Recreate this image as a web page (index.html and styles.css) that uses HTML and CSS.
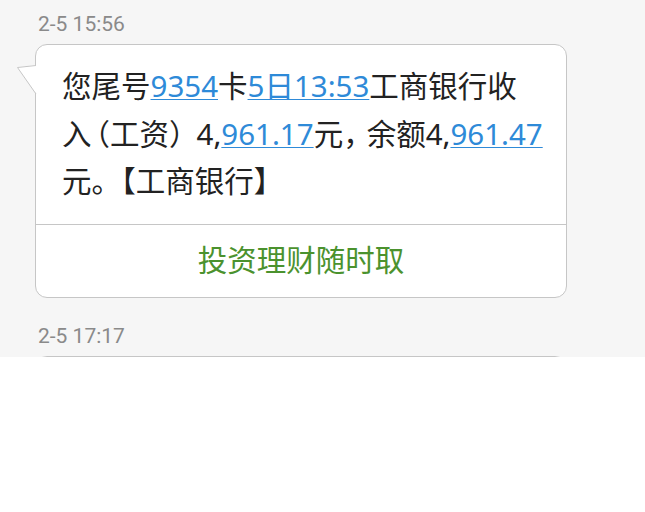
FILE: index.html
```html
<!DOCTYPE html>
<html lang="zh">
<head>
<meta charset="utf-8">
<title>短信</title>
<link rel="stylesheet" href="styles.css">
</head>
<body>
<div class="screen">
  <div class="msg">
    <div class="time">2-5 15:56</div>
    <div class="bubble">
      <svg class="tail" width="20" height="32" viewBox="0 0 20 32">
        <polygon points="20,0 0,2 20,30" fill="#fff"/>
        <polyline points="19,0.5 0.5,2.5 19,29" fill="none" stroke="#c6c6c6" stroke-width="1"/>
      </svg>
      <div class="body">您尾号<a class="link">9354</a>卡<a class="link">5日13:53</a>工商银行收入<span class="p-open">（</span>工资<span class="p-close">）</span>4,<a class="link">961.17</a>元<span class="p-comma">，</span>余额4,<a class="link">961.47</a>元。【工商银行】</div>
      <div class="action">投资理财随时取</div>
    </div>
  </div>
  <div class="msg">
    <div class="time">2-5 17:17</div>
    <div class="bubble">
      <div class="body">&nbsp;</div>
    </div>
  </div>
</div>
</body>
</html>
```
FILE: styles.css
```css
html, body {
  margin: 0;
  padding: 0;
  background: #ffffff;
}
.screen {
  background: #f6f6f6;
  height: 357px;
  overflow: hidden;
  padding: 0 78px 0 35px;
  font-family: "Noto Sans", "Noto Sans CJK SC", sans-serif;
}
.msg + .msg {
  margin-top: 14px;
}
.time {
  font-family: "Liberation Sans Narrow", Roboto, sans-serif;
  font-size: 21px;
  line-height: 24px;
  color: #8a8a8a;
  padding: 12px 3px 8px;
}
.bubble {
  position: relative;
  background: #ffffff;
  border: 1px solid #c6c6c6;
  border-radius: 12px;
}
.tail {
  position: absolute;
  left: -19px;
  top: 20px;
  display: block;
}
.body {
  font-size: 29.5px;
  line-height: 47.5px;
  color: #222222;
  padding: 17px 21px 19px 26px;
}
.p-open {
  margin-left: -11px;
}
.p-close {
  margin-right: -2px;
}
.p-comma {
  margin-right: -6px;
}
.link {
  color: #2e8ad8;
  text-decoration: underline;
  text-decoration-thickness: 1px;
  text-underline-offset: 2px;
}
.action {
  border-top: 1px solid #c6c6c6;
  height: 66px;
  padding-bottom: 6px;
  display: flex;
  align-items: center;
  justify-content: center;
  font-family: "Noto Sans CJK SC", sans-serif;
  font-size: 29.5px;
  color: #4b922e;
}
```
